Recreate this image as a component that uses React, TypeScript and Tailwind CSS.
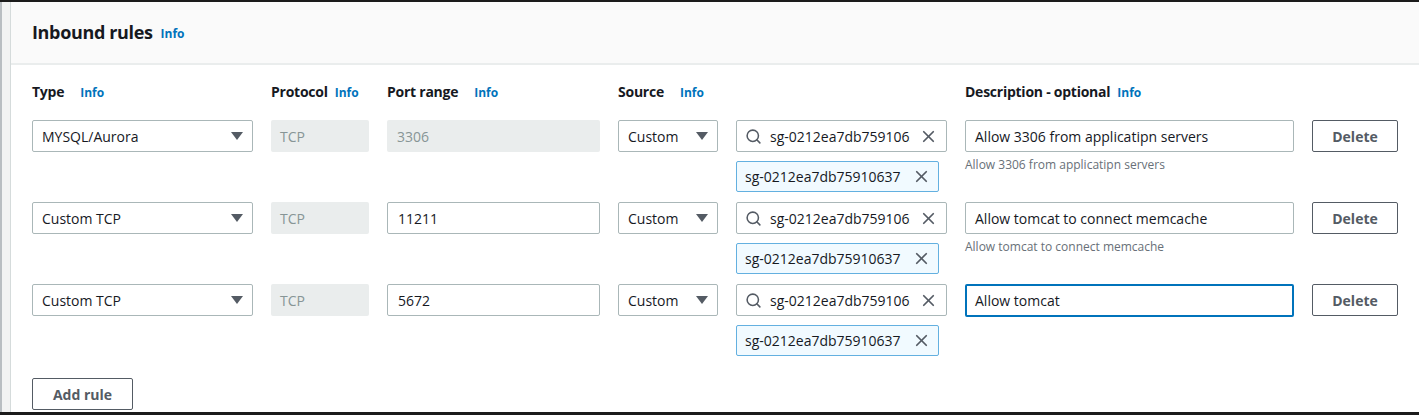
import { Search, X } from "lucide-react";

const font = { fontFamily: "'Open Sans', 'Noto Sans', sans-serif" };

type Rule = {
  type: string;
  port: string;
  portDisabled?: boolean;
  desc: string;
  hint?: string;
  focused?: boolean;
};

const rules: Rule[] = [
  {
    type: "MYSQL/Aurora",
    port: "3306",
    portDisabled: true,
    desc: "Allow 3306 from applicatipn servers",
    hint: "Allow 3306 from applicatipn servers",
  },
  {
    type: "Custom TCP",
    port: "11211",
    desc: "Allow tomcat to connect memcache",
    hint: "Allow tomcat to connect memcache",
  },
  { type: "Custom TCP", port: "5672", desc: "Allow tomcat", focused: true },
];

function Caret() {
  return (
    <svg width="12" height="8" viewBox="0 0 12 8" className="shrink-0">
      <path d="M0 0 L12 0 L6 8 Z" fill="#545b64" />
    </svg>
  );
}

function Label({ text, gap }: { text: string; gap: string }) {
  return (
    <div className="flex items-baseline h-5 leading-5 text-[14px] font-bold tracking-[-0.25px] text-[#16191f]">
      {text}
      <span className={`${gap} text-[12px] font-bold tracking-normal text-[#0073bb]`}>Info</span>
    </div>
  );
}

function Select({ value }: { value: string }) {
  return (
    <div className="h-8 flex items-center justify-between pl-[9px] pr-[9px] border border-[#aab7b8] rounded-[2px] bg-white text-[14px] text-[#16191f]">
      <span>{value}</span>
      <Caret />
    </div>
  );
}

function RuleRow({ rule }: { rule: Rule }) {
  return (
    <div className="grid grid-cols-[221px_98px_213px_100px_211px_329px_86px] gap-x-[18px] h-[72px]">
      <Select value={rule.type} />
      <div className="h-8 flex items-center px-[9px] bg-[#eaeded] rounded-[2px] text-[14px] text-[#879596]">
        TCP
      </div>
      {rule.portDisabled ? (
        <div className="h-8 flex items-center px-[10px] bg-[#eaeded] rounded-[2px] text-[14px] text-[#879596]">
          {rule.port}
        </div>
      ) : (
        <div className="h-8 flex items-center px-[10px] border border-[#aab7b8] rounded-[2px] text-[14px] text-[#16191f]">
          {rule.port}
        </div>
      )}
      <Select value="Custom" />
      <div className="flex flex-col gap-[9px]">
        <div className="h-8 flex items-center pl-[8px] pr-[8px] border border-[#aab7b8] rounded-[2px] text-[14px] text-[#16191f]">
          <Search size={17} strokeWidth={2.2} color="#545b64" className="shrink-0" />
          <span className="ml-[8px] flex-1 overflow-hidden whitespace-nowrap">sg-0212ea7db75910637</span>
          <X size={19} strokeWidth={2.2} color="#545b64" className="shrink-0 ml-[9px]" />
        </div>
        <div className="h-[31px] w-[203px] flex items-center pl-[8px] pr-[7px] justify-between border border-[#63b0e0] bg-[#f1faff] rounded-[2px] text-[14px] text-[#16191f]">
          <span className="whitespace-nowrap">sg-0212ea7db75910637</span>
          <X size={19} strokeWidth={2.2} color="#545b64" className="shrink-0" />
        </div>
      </div>
      <div className="flex flex-col">
        {rule.focused ? (
          <div className="h-[33px] flex items-center px-[8px] border-2 border-[#0073bb] rounded-[2px] text-[14px] text-[#16191f]">
            {rule.desc}
          </div>
        ) : (
          <div className="h-8 flex items-center px-[9px] border border-[#aab7b8] rounded-[2px] text-[14px] text-[#16191f]">
            {rule.desc}
          </div>
        )}
        {rule.hint && (
          <div className="mt-[5px] text-[12px] leading-4 text-[#687078]">{rule.hint}</div>
        )}
      </div>
      <div>
        <button className="h-8 w-full flex items-center justify-center border border-[#545b64] rounded-[2px] bg-white text-[14px] font-bold text-[#545b64]">
          Delete
        </button>
      </div>
    </div>
  );
}

export default function App() {
  return (
    <div className="w-[1419px] h-[415px] flex flex-col bg-white overflow-hidden" style={font}>
      <div className="h-[2px] bg-[#1b1b1b]" />
      <div className="flex-1 flex min-h-0">
        <div className="w-[2px] bg-[#b9bec2]" />
        <div className="w-[8px] bg-[#f2f3f3]" />
        <div className="flex-1 flex flex-col border-l border-[#d5dbdb] min-w-0">
          <div className="h-[63px] flex items-center pl-[21px] bg-[#fafafa] border-b-2 border-[#eaeded]">
            <span className="text-[18px] font-bold tracking-[-0.35px] text-[#16191f]">Inbound rules</span>
            <span className="ml-[8px] mt-[3px] text-[12px] font-bold text-[#0073bb]">Info</span>
          </div>
          <div className="pl-[21px] pt-[17px]">
            <div className="grid grid-cols-[221px_98px_213px_100px_211px_329px_86px] gap-x-[18px] mb-[18px]">
              <Label text="Type" gap="ml-[16px]" />
              <Label text="Protocol" gap="ml-[7px]" />
              <Label text="Port range" gap="ml-[16px]" />
              <Label text="Source" gap="ml-[16px]" />
              <div />
              <Label text="Description - optional" gap="ml-[7px]" />
              <div />
            </div>
            <div className="flex flex-col gap-[10px]">
              {rules.map((r, i) => (
                <RuleRow key={i} rule={r} />
              ))}
            </div>
            <button className="mt-[22px] h-8 w-[101px] flex items-center justify-center border border-[#545b64] rounded-[2px] bg-white text-[14px] font-bold text-[#545b64]">
              Add rule
            </button>
          </div>
        </div>
      </div>
      <div className="h-[3px] bg-[#1b1b1b] shrink-0" />
    </div>
  );
}
